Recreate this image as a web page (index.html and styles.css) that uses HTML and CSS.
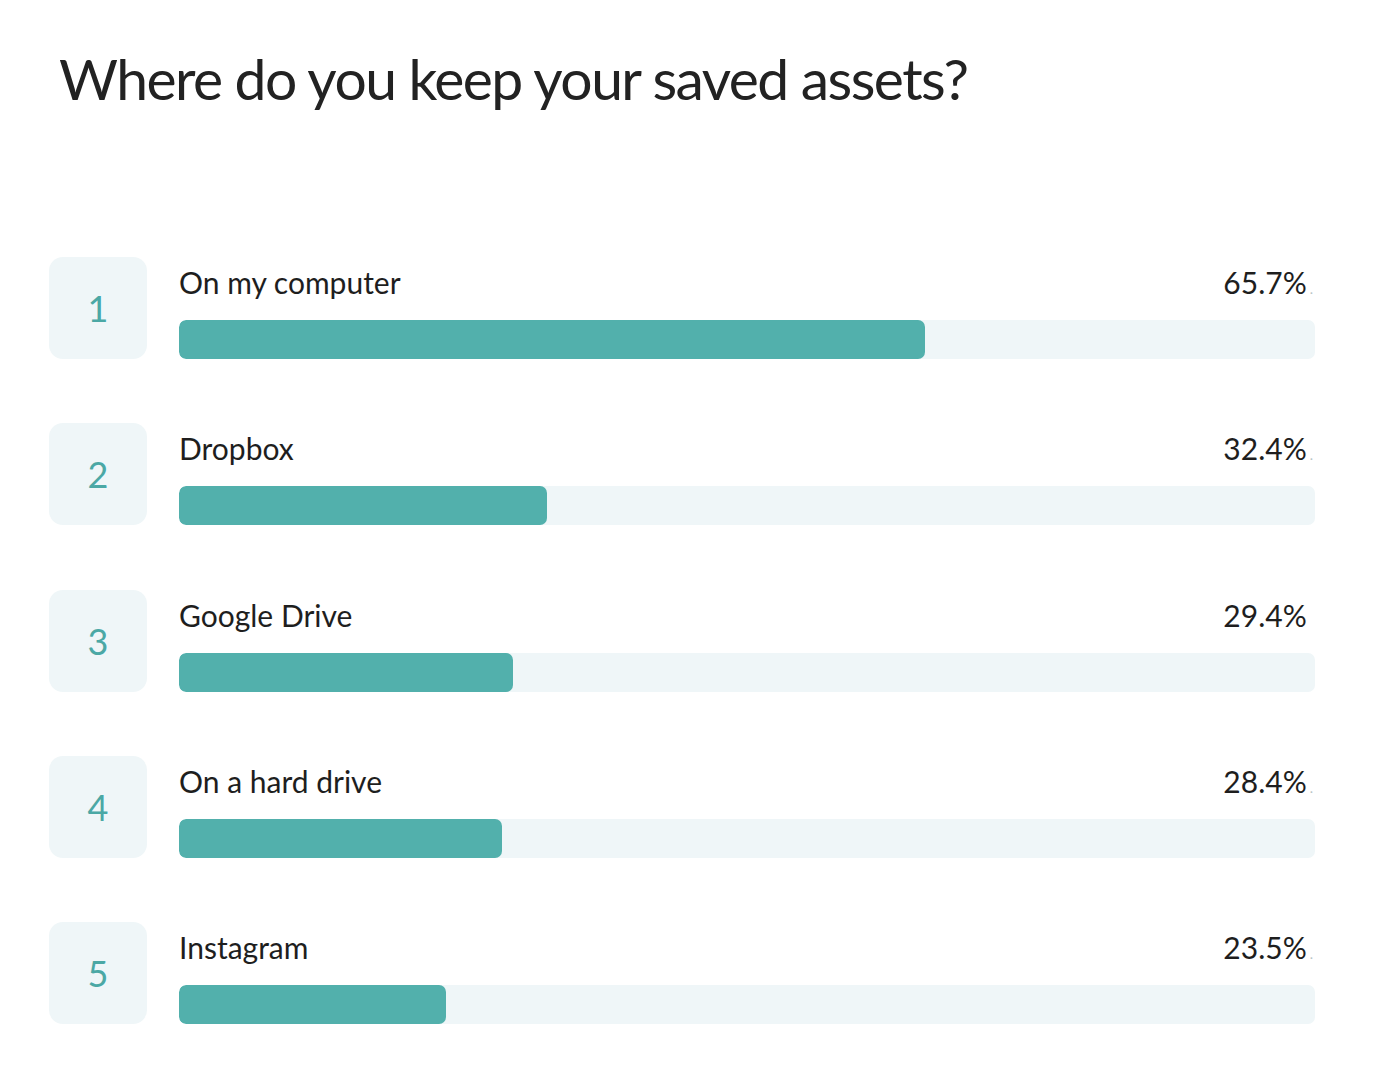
FILE: index.html
```html
<!DOCTYPE html>
<html lang="en">
<head>
<meta charset="utf-8">
<title>Where do you keep your saved assets?</title>
<link rel="stylesheet" href="styles.css">
</head>
<body>
<main class="poll">
  <h1 class="poll-title">Where do you keep your saved assets?</h1>
  <ol class="results">
    <li class="result">
      <div class="rank">1</div>
      <div class="detail">
        <div class="label-row"><span class="label">On my computer</span><span class="pct">65.7%<span class="dot">.</span></span></div>
        <div class="track"><div class="fill" style="width:65.7%"></div></div>
      </div>
    </li>
    <li class="result">
      <div class="rank">2</div>
      <div class="detail">
        <div class="label-row"><span class="label">Dropbox</span><span class="pct">32.4%<span class="dot">.</span></span></div>
        <div class="track"><div class="fill" style="width:32.4%"></div></div>
      </div>
    </li>
    <li class="result">
      <div class="rank">3</div>
      <div class="detail">
        <div class="label-row"><span class="label">Google Drive</span><span class="pct">29.4%<span class="dot hidden">.</span></span></div>
        <div class="track"><div class="fill" style="width:29.4%"></div></div>
      </div>
    </li>
    <li class="result">
      <div class="rank">4</div>
      <div class="detail">
        <div class="label-row"><span class="label">On a hard drive</span><span class="pct">28.4%<span class="dot">.</span></span></div>
        <div class="track"><div class="fill" style="width:28.4%"></div></div>
      </div>
    </li>
    <li class="result">
      <div class="rank">5</div>
      <div class="detail">
        <div class="label-row"><span class="label">Instagram</span><span class="pct">23.5%<span class="dot">.</span></span></div>
        <div class="track"><div class="fill" style="width:23.5%"></div></div>
      </div>
    </li>
  </ol>
</main>
</body>
</html>
```
FILE: styles.css
```css
html, body {
  margin: 0;
  padding: 0;
  background: #ffffff;
}

body {
  font-family: Lato, "Open Sans", "Liberation Sans", sans-serif;
  color: #1e1e1e;
}

.poll {
  padding: 0 85px 0 49px;
}

.poll-title {
  margin: 0;
  padding: 44px 0 0 10px;
  font-size: 57px;
  font-weight: 400;
  line-height: 68px;
  letter-spacing: -1.55px;
  color: #222222;
}

.results {
  list-style: none;
  margin: 0;
  padding: 0;
  padding-top: 145px;
  display: flex;
  flex-direction: column;
  gap: 64.25px;
}

.result {
  display: flex;
  gap: 32px;
  height: 102px;
}

.rank {
  flex: 0 0 98px;
  height: 102px;
  border-radius: 14px;
  background: #eff6f8;
  color: #4ba8a5;
  font-size: 36px;
  display: flex;
  align-items: center;
  justify-content: center;
}

.detail {
  flex: 1;
  display: flex;
  flex-direction: column;
  justify-content: space-between;
}

.label-row {
  display: flex;
  justify-content: space-between;
  align-items: baseline;
  padding-top: 7px;
  font-size: 30px;
  line-height: 36px;
}

.pct {
  padding-right: 2px;
}

.dot {
  font-size: 14px;
  color: #b8c4c6;
  margin-left: 3px;
}

.dot.hidden {
  visibility: hidden;
}

.track {
  height: 39px;
  border-radius: 7px;
  background: #eff6f8;
  overflow: hidden;
}

.fill {
  height: 100%;
  background: #52b0ac;
  border-radius: 7px;
}
```
